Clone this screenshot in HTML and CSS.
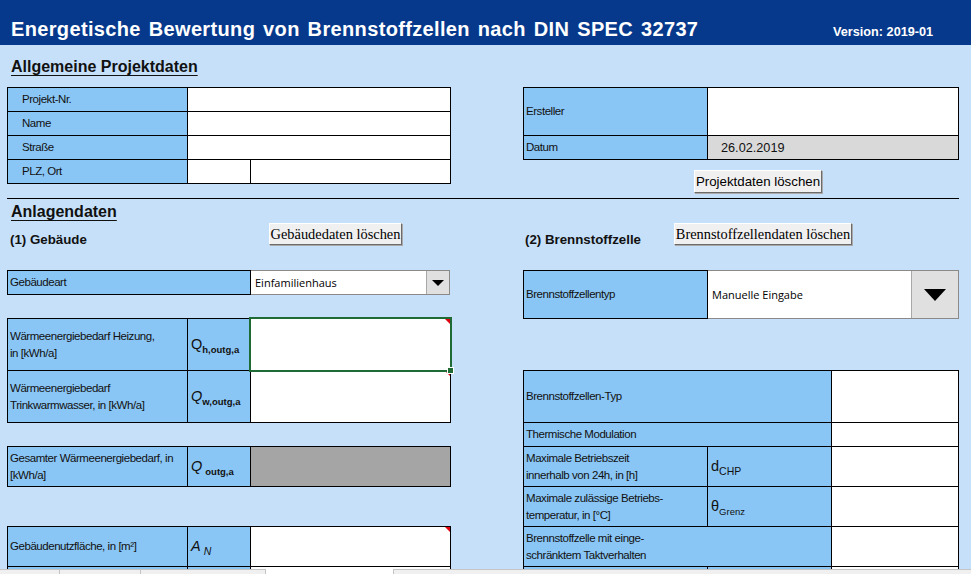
FILE: index.html
```html
<!DOCTYPE html>
<html lang="de">
  <head>
    <meta charset="UTF-8" />
    <meta name="viewport" content="width=device-width, initial-scale=1.0" />
    <title>Energetische Bewertung von Brennstoffzellen</title>

    <link rel="stylesheet" href="styles.css">
  </head>
  <body>
    <header class="kopf">
      <h1>Energetische Bewertung von Brennstoffzellen nach DIN SPEC 32737</h1>
      <span class="version">Version: 2019-01</span>
    </header>

    <main class="blatt">
      <section class="spalten">
        <div>
          <h2 class="abschnitt">Allgemeine Projektdaten</h2>
          <div class="tabelle t-projekt">
            <div class="zelle label einzug">Projekt-Nr.</div>
            <div class="zelle breit"></div>
            <div class="zelle label einzug">Name</div>
            <div class="zelle breit"></div>
            <div class="zelle label einzug">Straße</div>
            <div class="zelle breit"></div>
            <div class="zelle label einzug">PLZ, Ort</div>
            <div class="zelle"></div>
            <div class="zelle"></div>
          </div>
        </div>

        <div class="rechts-oben">
          <div class="tabelle t-ersteller">
            <div class="zelle label">Ersteller</div>
            <div class="zelle"></div>
            <div class="zelle label">Datum</div>
            <div class="zelle grau datum">26.02.2019</div>
          </div>
          <button class="knopf knopf-projekt">Projektdaten löschen</button>
        </div>
      </section>

      <div class="trenner"></div>

      <h2 class="abschnitt anlagen">Anlagendaten</h2>

      <section class="spalten">
        <!-- (1) Gebäude -->
        <div>
          <div class="unterkopf">
            <h3 class="links-titel">(1) Gebäude</h3>
            <button class="knopf serif knopf-gebaeude">Gebäudedaten löschen</button>
          </div>

          <div class="auswahl klein">
            <div class="zelle label">Gebäudeart</div>
            <div class="liste">
              <span class="liste-text">Einfamilienhaus</span>
              <span class="pfeil"><span class="dreieck"></span></span>
            </div>
          </div>

          <div class="tabelle t-waerme">
            <div class="zelle label">Wärmeenergiebedarf Heizung,<br />in [kWh/a]</div>
            <div class="zelle label formel"><span>Q<sub class="fett">h,outg,a</sub></span></div>
            <div class="zelle aktiv notiz"><span class="griff"></span></div>
            <div class="zelle label">Wärmeenergiebedarf<br />Trinkwarmwasser, in [kWh/a]</div>
            <div class="zelle label formel"><span><i>Q</i><sub class="fett">w,outg,a</sub></span></div>
            <div class="zelle notiz"></div>
          </div>

          <div class="tabelle t-gesamt">
            <div class="zelle label">Gesamter Wärmeenergiebedarf, in<br />[kWh/a]</div>
            <div class="zelle label formel"><span><i>Q</i><sub class="fett abstand">outg,a</sub></span></div>
            <div class="zelle dunkelgrau"></div>
          </div>

          <div class="tabelle t-flaeche">
            <div class="zelle label">Gebäudenutzfläche, in [m²]</div>
            <div class="zelle label formel"><span><i>A</i><sub class="abstand gross-sub"><i>N</i></sub></span></div>
            <div class="zelle notiz"></div>
            <div class="zelle label"></div>
            <div class="zelle label"></div>
            <div class="zelle"></div>
          </div>
        </div>

        <!-- (2) Brennstoffzelle -->
        <div>
          <div class="unterkopf">
            <h3 class="rechts-titel">(2) Brennstoffzelle</h3>
            <button class="knopf serif knopf-bz">Brennstoffzellendaten löschen</button>
          </div>

          <div class="auswahl gross">
            <div class="zelle label">Brennstoffzellentyp</div>
            <div class="liste">
              <span class="liste-text">Manuelle Eingabe</span>
              <span class="pfeil"><span class="dreieck"></span></span>
            </div>
          </div>

          <div class="tabelle t-bz">
            <div class="zelle label breit">Brennstoffzellen-Typ</div>
            <div class="zelle"></div>
            <div class="zelle label breit">Thermische Modulation</div>
            <div class="zelle"></div>
            <div class="zelle label">Maximale Betriebszeit<br />innerhalb von 24h, in [h]</div>
            <div class="zelle label formel"><span>d<sub class="gross-sub">CHP</sub></span></div>
            <div class="zelle"></div>
            <div class="zelle label">Maximale zulässige Betriebs-<br />temperatur, in [°C]</div>
            <div class="zelle label formel"><span>θ<sub>Grenz</sub></span></div>
            <div class="zelle"></div>
            <div class="zelle label breit">Brennstoffzelle mit einge-<br />schränktem Taktverhalten</div>
            <div class="zelle"></div>
            <div class="zelle label"></div>
            <div class="zelle label"></div>
            <div class="zelle"></div>
          </div>
        </div>
      </section>
    </main>

    <div class="statusleiste">
      <div class="reiter">
        <span class="r1"></span>
        <span class="r2"></span>
        <span class="r3"></span>
      </div>
      <div class="luecke"></div>
      <div class="scroll"></div>
    </div>
  </body>
</html>
```

FILE: styles.css
```css
html,
body {
  margin: 0;
  height: 100%;
  overflow: hidden;
}

body {
  background-color: #c6e0f9;
  font-family: "Liberation Sans", Arial, sans-serif;
  font-size: 11.5px;
  color: #111;
}

/* Titelleiste */
.kopf {
  display: grid;
  grid-template-columns: 822px auto;
  align-items: baseline;
  height: 45px;
  box-sizing: border-box;
  padding: 18px 0 0 11px;
  background-color: #06398c;
  color: #fff;
}

.kopf h1 {
  margin: 0;
  font-size: 20px;
  line-height: 22px;
  letter-spacing: 0.35px;
  word-spacing: 2px;
}

.version {
  font-size: 12.7px;
  font-weight: bold;
}

.blatt {
  padding: 0 12px 0 7px;
}

.spalten {
  display: grid;
  grid-template-columns: 444px 436px;
  column-gap: 72px;
  align-items: start;
}

.abschnitt {
  margin: 12px 0 10px;
  padding-left: 4px;
  font-size: 16px;
  line-height: 20px;
  text-decoration: underline;
  text-underline-offset: 3px;
}

.abschnitt.anlagen {
  margin: 3px 0 0;
}

.trenner {
  height: 1px;
  margin-top: 5px;
  background-color: #000;
}

/* Tabellen */
.tabelle {
  display: grid;
  gap: 1px;
  background-color: #000;
  border: 1px solid #000;
}

.zelle {
  display: flex;
  align-items: center;
  position: relative;
  background-color: #fff;
}

.label {
  background-color: #8ac6f5;
  padding-left: 2px;
  line-height: 17px;
  letter-spacing: -0.45px;
}

.einzug {
  padding-left: 14px;
}

.breit {
  grid-column: span 2;
}

.grau {
  background-color: #d9d9d9;
}

.dunkelgrau {
  background-color: #a5a5a5;
}

.datum {
  padding-left: 13px;
  font-size: 12.7px;
}

.t-projekt {
  grid-template-columns: 179px 62px 199px;
  grid-auto-rows: 23px;
}

.t-ersteller {
  margin-top: 42px;
  grid-template-columns: 183px 250px;
  grid-template-rows: 47px 23px;
}

.t-waerme {
  margin-top: 23px;
  grid-template-columns: 179px 62px 199px;
  grid-template-rows: 51px 51px;
}

.t-gesamt {
  margin-top: 23px;
  grid-template-columns: 179px 62px 199px;
  grid-template-rows: 39px;
}

.t-flaeche {
  margin-top: 39px;
  grid-template-columns: 179px 62px 199px;
  grid-template-rows: 39px 39px;
}

.t-bz {
  margin-top: 51px;
  grid-template-columns: 183px 123px 126px;
  grid-template-rows: 51px 23px 39px 39px 39px 39px;
}

/* Formelzeichen */
.formel {
  padding-left: 3px;
  font-size: 14.5px;
  letter-spacing: 0;
}

.formel sub {
  font-size: 9.5px;
  vertical-align: -4px;
  line-height: 0;
}

.formel sub.fett {
  font-weight: bold;
}

.formel sub.gross-sub {
  font-size: 10.5px;
}

.formel sub.abstand {
  margin-left: 3px;
}

/* markierte Zelle und Kommentare */
.aktiv {
  z-index: 1;
  outline: 2px solid #1f6b35;
}

.griff {
  position: absolute;
  right: -4px;
  bottom: -4px;
  width: 5px;
  height: 5px;
  background-color: #1f6b35;
  border: 1px solid #fff;
}

.notiz::after {
  content: "";
  position: absolute;
  top: 0;
  right: 0;
  border-left: 5px solid transparent;
  border-top: 5px solid #e3000f;
}

/* Knöpfe */
.knopf {
  padding: 0;
  background-color: #f0f0f0;
  border: 1px solid;
  border-color: #fff #6b6b6b #6b6b6b #fff;
  box-shadow: 1px 1px 0 #a9a9a9;
  color: #000;
  font-family: "Liberation Sans", Arial, sans-serif;
  font-size: 13.3px;
  white-space: nowrap;
}

.knopf.serif {
  font-family: "Liberation Serif", "Times New Roman", serif;
  font-size: 14.4px;
}

.knopf-projekt {
  display: block;
  margin: 10px 0 0 171px;
  width: 128px;
  height: 23px;
}

.unterkopf {
  display: flex;
  align-items: flex-start;
  height: 25px;
}

.unterkopf h3 {
  margin: 10px 0 0;
  font-size: 13.3px;
  line-height: 16px;
}

.links-titel {
  width: 262px;
  padding-left: 3px;
  box-sizing: border-box;
}

.rechts-titel {
  width: 151px;
  padding-left: 2px;
  box-sizing: border-box;
}

.knopf-gebaeude {
  margin-top: 1px;
  width: 133px;
  height: 22px;
}

.knopf-bz {
  margin-top: 1px;
  width: 178px;
  height: 22px;
}

/* Auswahllisten */
.auswahl {
  display: flex;
  margin-top: 23px;
}

.auswahl .label {
  border: 1px solid #000;
}

.auswahl.klein {
  height: 25px;
}

.auswahl.klein .label {
  width: 244px;
  box-sizing: border-box;
}

.auswahl.gross {
  height: 49px;
}

.auswahl.gross .label {
  width: 185px;
  box-sizing: border-box;
}

.liste {
  display: flex;
  flex: 1;
  align-items: stretch;
  background-color: #fff;
  border: 1px solid #8a8a8a;
  border-left: 0;
  font-family: "Open Sans", "Noto Sans", sans-serif;
  font-size: 11px;
  color: #000;
}

.liste-text {
  flex: 1;
  display: flex;
  align-items: center;
  padding-left: 4px;
}

.pfeil {
  display: flex;
  align-items: center;
  justify-content: center;
  background-color: #e0e0e0;
  border-left: 1px solid #a8a8a8;
}

.klein .liste {
  margin-right: 1px;
}

.klein .pfeil {
  width: 22px;
}

.klein .dreieck {
  border-left: 6px solid transparent;
  border-right: 6px solid transparent;
  border-top: 6px solid #000;
}

.gross .pfeil {
  width: 46px;
}

.gross .dreieck {
  border-left: 11px solid transparent;
  border-right: 11px solid transparent;
  border-top: 12px solid #000;
}

/* untere Leiste des Fensters */
.statusleiste {
  position: fixed;
  left: 0;
  right: 0;
  bottom: 0;
  display: flex;
  height: 5px;
}

.reiter {
  display: flex;
  width: 266px;
}

.reiter span {
  background-color: #f0f0f0;
  border-top: 1px solid #c4c4c4;
  border-right: 1px solid #c4c4c4;
}

.reiter .r1 {
  width: 59px;
}

.reiter .r2 {
  width: 80px;
}

.reiter .r3 {
  flex: 1;
}

.luecke {
  width: 127px;
}

.scroll {
  flex: 1;
  background-color: #f0f0f0;
  border-top: 1px solid #c4c4c4;
  border-left: 1px solid #c4c4c4;
}
```
